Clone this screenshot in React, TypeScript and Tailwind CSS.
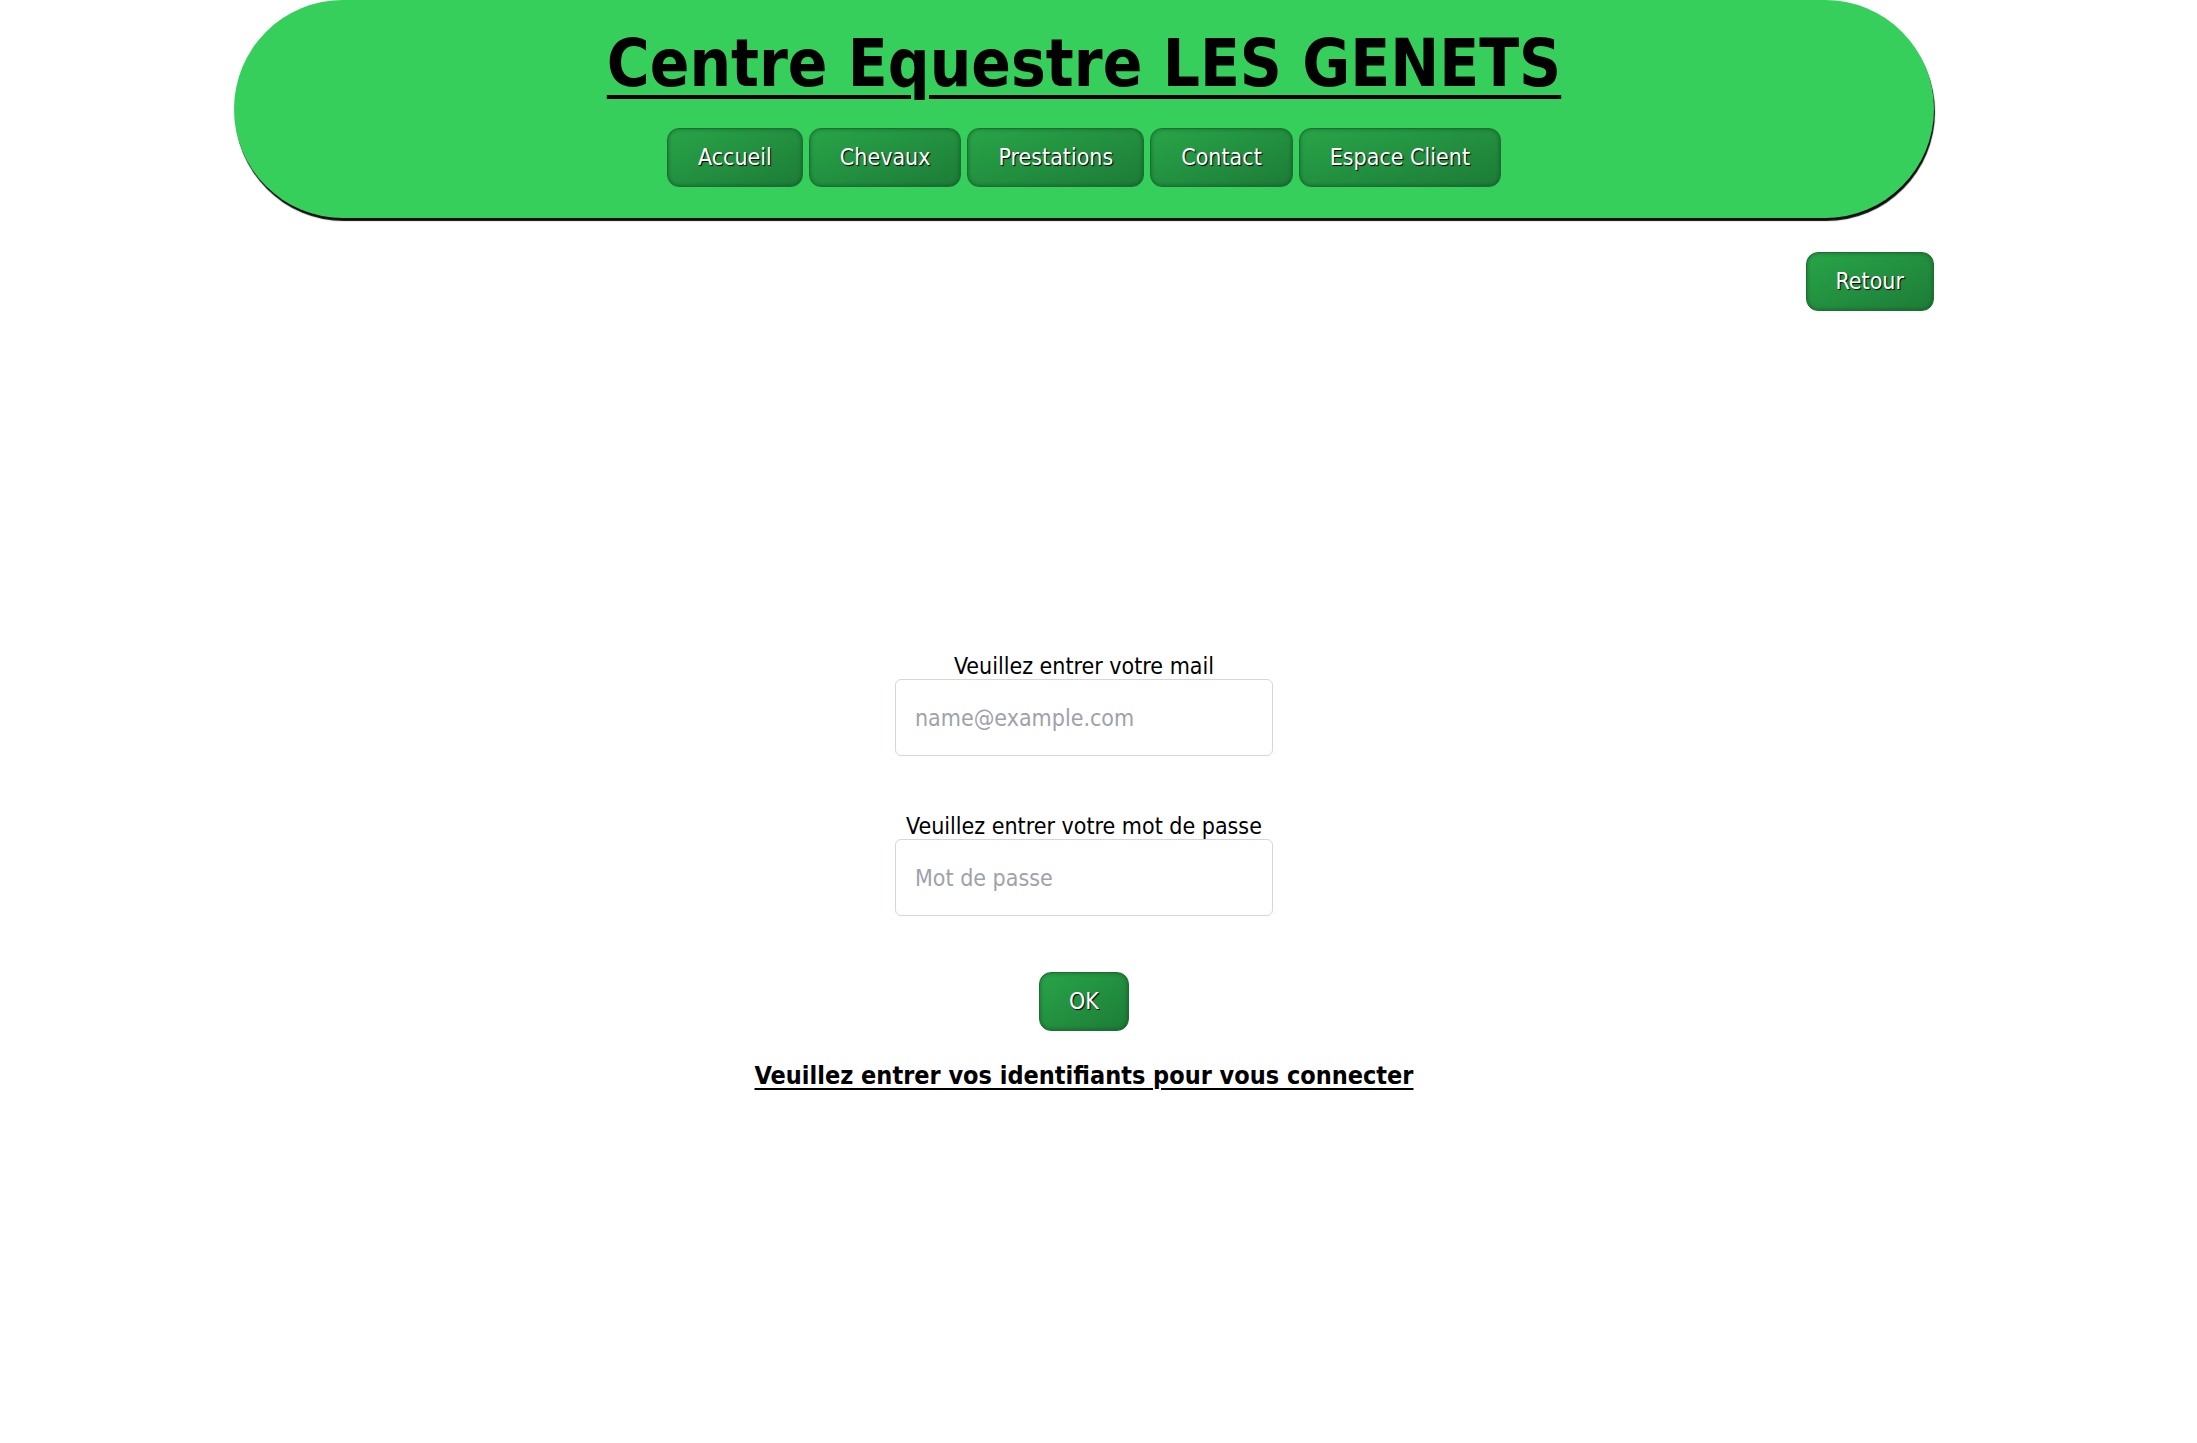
export default function App() {
  const navItems = ["Accueil", "Chevaux", "Prestations", "Contact", "Espace Client"];

  // green pill buttons used in the nav, "Retour" and "OK"
  const btn =
    "flex items-center h-[59px] rounded-[12px] border border-[#1b6f32] bg-gradient-to-br from-[#28a548] to-[#1d7c37] text-white text-[23px] shadow-[inset_0_0_4px_rgba(0,0,0,0.35)] [text-shadow:1px_1px_1px_#000]";

  return (
    <div className="w-[2168px] min-h-[1443px] bg-white flex flex-col items-center font-['DejaVu_Sans','Liberation_Sans',sans-serif] font-stretch-condensed text-black">
      {/* Header */}
      <header className="w-[1700px] h-[218px] rounded-[110px] bg-[#37cf5c] shadow-[1px_3px_1px_rgba(0,0,0,0.95)] flex flex-col items-center pt-[31px]">
        <h1 className="text-[65px] leading-none font-bold underline decoration-[4px] underline-offset-[9px]">
          Centre Equestre LES GENETS
        </h1>
        <nav className="flex gap-[6px] mt-[32px]">
          {navItems.map((item) => (
            <a key={item} className={`${btn} px-[30px]`}>
              {item}
            </a>
          ))}
        </nav>
      </header>

      {/* Back */}
      <div className="w-[1700px] flex justify-end mt-[34px]">
        <button className={`${btn} px-[29px]`}>Retour</button>
      </div>

      {/* Login form */}
      <form className="flex flex-col items-center mt-[342px]">
        <label className="text-[23px] leading-[26px]">Veuillez entrer votre mail</label>
        <input
          type="email"
          placeholder="name@example.com"
          className="w-[378px] h-[77px] border border-[#d3d6db] rounded-[6px] px-[19px] text-[23px] placeholder:text-[#9ea2a9] outline-none"
        />

        <label className="text-[23px] leading-[26px] mt-[57px]">Veuillez entrer votre mot de passe</label>
        <input
          type="password"
          placeholder="Mot de passe"
          className="w-[378px] h-[77px] border border-[#d3d6db] rounded-[6px] px-[19px] text-[23px] placeholder:text-[#9ea2a9] outline-none"
        />

        <button type="button" className={`${btn} h-[58px] px-[29px] mt-[56px]`}>
          OK
        </button>

        <p className="mt-[26px] text-[25px] font-bold underline decoration-[2px] underline-offset-[4px]">
          Veuillez entrer vos identifiants pour vous connecter
        </p>
      </form>
    </div>
  );
}
